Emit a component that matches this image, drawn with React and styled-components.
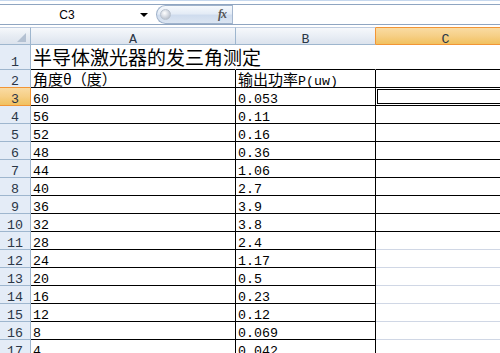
import React from "react";
import styled, { createGlobalStyle, css } from "styled-components";

const GlobalStyle = createGlobalStyle`
  html, body { margin: 0; padding: 0; background: #fff; }
  body { width: 500px; height: 353px; overflow: hidden; }
`;

const CJK = `"Noto Sans CJK SC", "Noto Sans", sans-serif`;
const MONO = `"Liberation Mono", "DejaVu Sans Mono", monospace`;
const ORANGE = "#f29536";
const ORANGE_BG = "linear-gradient(180deg, #f9dba3 0%, #f6cf86 50%, #f1c15f 100%)";
const HEAD_LINE = "#9eb6ce";
const LINE = { black: "#000", grid: "#d0d7e5", none: "transparent" };

const DATA = [
  ["60", "0.053"],
  ["56", "0.11"],
  ["52", "0.16"],
  ["48", "0.36"],
  ["44", "1.06"],
  ["40", "2.7"],
  ["36", "3.9"],
  ["32", "3.8"],
  ["28", "2.4"],
  ["24", "1.17"],
  ["20", "0.5"],
  ["16", "0.23"],
  ["12", "0.12"],
  ["8", "0.069"],
  ["4", "0.042"],
];

const Window = styled.div`
  width: 500px;
  height: 353px;
  overflow: hidden;
  display: flex;
  flex-direction: column;
`;

/* ---------- formula bar ---------- */

const BarWrap = styled.div`
  box-sizing: border-box;
  height: 27px;
  padding-top: 3px;
  border-top: 1px solid #c6d8ee;
  flex: none;
`;

const Bar = styled.div`
  box-sizing: border-box;
  height: 21px;
  display: flex;
  align-items: stretch;
  border-top: 1px solid #8fa5c1;
  border-bottom: 1px solid #8fa5c1;
`;

const NameBox = styled.div`
  width: 134px;
  display: flex;
  align-items: center;
  justify-content: center;
  font: 12px "Liberation Sans", Arial, sans-serif;
  color: #000;
`;

const Drop = styled.div`
  width: 20px;
  display: flex;
  align-items: center;
  justify-content: center;

  &::after {
    content: "";
    width: 0;
    height: 0;
    border-left: 4px solid transparent;
    border-right: 4px solid transparent;
    border-top: 4px solid #000;
    margin-top: 1px;
  }
`;

const Pill = styled.div`
  width: 76px;
  margin-left: 2px;
  box-sizing: border-box;
  display: flex;
  align-items: center;
  justify-content: space-between;
  padding: 0 6px 0 3px;
  border: 1px solid #9fb2cb;
  border-right: none;
  border-radius: 10px 0 0 10px;
  background: linear-gradient(180deg, #f6f9fd 0%, #e4ecf6 45%, #cfdcee 55%, #dbe5f2 100%);
`;

const Knob = styled.span`
  width: 9px;
  height: 9px;
  border-radius: 50%;
  background: radial-gradient(circle at 40% 35%, #ffffff 0%, #d6dbe3 45%, #a8b1be 100%);
  border: 1px solid #b9c2ce;
`;

const Fx = styled.span`
  font: italic bold 12px "Liberation Serif", "Times New Roman", serif;
  color: #555;
  letter-spacing: -1px;
`;

const FormulaInput = styled.div`
  flex: 1;
  border-left: 1px solid #a5b7cf;
  background: #fff;
`;

/* ---------- sheet grid ---------- */

const Sheet = styled.div`
  display: grid;
  grid-template-columns: 31px 205px 140px 140px;
  grid-template-rows: 18px 25px repeat(16, 18px);
  flex: none;
`;

const Latin = styled.span`
  font-family: ${MONO};
  font-size: 13.3px;
`;

const Corner = styled.div`
  box-sizing: border-box;
  border-top: 1px solid #c0cde0;
  border-right: 1px solid ${HEAD_LINE};
  border-bottom: 1px solid ${HEAD_LINE};
  background: linear-gradient(180deg, #f6f8fb 0%, #e7ecf3 50%, #dce3ed 100%);
  display: flex;
  align-items: flex-end;
  justify-content: flex-end;
  padding: 0 4px 2px 0;

  &::after {
    content: "";
    width: 0;
    height: 0;
    border-left: 9px solid transparent;
    border-bottom: 9px solid #b4c1d2;
  }
`;

const ColHead = styled.div`
  box-sizing: border-box;
  border-top: 1px solid ${(p) => (p.$selected ? ORANGE : "#c0cde0")};
  border-right: 1px solid ${(p) => (p.$beforeSelected ? ORANGE : HEAD_LINE)};
  border-bottom: 1px solid ${(p) => (p.$selected ? ORANGE : HEAD_LINE)};
  background: ${(p) =>
    p.$selected
      ? ORANGE_BG
      : "linear-gradient(180deg, #f6f8fb 0%, #e9eef5 50%, #dce3ed 100%)"};
  text-align: center;
  font: 15px/17px ${CJK};
  color: #2a3646;
`;

const RowHead = styled.div`
  box-sizing: border-box;
  background: ${(p) => (p.$selected ? ORANGE_BG : "#e4ecf7")};
  border-right: 1px solid ${(p) => (p.$selected ? ORANGE : HEAD_LINE)};
  border-bottom: 1px solid
    ${(p) => (p.$selected || p.$beforeSelected ? ORANGE : HEAD_LINE)};
  text-align: center;
  padding-top: ${(p) => (p.$tall ? 5 : 0)}px;
  font: 15px/${(p) => (p.$tall ? 20 : 18)}px ${CJK};
  color: #2a3646;
`;

const Cell = styled.div`
  box-sizing: border-box;
  min-width: 0;
  padding: 0 2px;
  font: 15px/18px ${CJK};
  color: #000;
  white-space: nowrap;
  overflow: ${(p) => (p.$spill ? "visible" : "hidden")};
  border-right: 1px solid ${(p) => LINE[p.$right || "none"]};
  border-bottom: 1px solid ${(p) => LINE[p.$bottom || "grid"]};
  ${(p) =>
    p.$title &&
    css`
      font-size: 19px;
      line-height: 24px;
    `}
  ${(p) =>
    p.$active &&
    css`
      box-shadow: inset 0 0 0 1px #fff, inset 0 0 0 2px #000;
    `}
`;

function Runs({ text }) {
  const parts = text.match(/[\x00-\x7f]+|[^\x00-\x7f]+/g) || [];
  return parts.map((p, i) =>
    /[\x00-\x7f]/.test(p[0]) ? <Latin key={i}>{p}</Latin> : <span key={i}>{p}</span>
  );
}

function App() {
  const rows = [["角度θ（度）", "输出功率P(uw)"], ...DATA];

  return (
    <Window>
      <GlobalStyle />
      <BarWrap>
        <Bar>
          <NameBox>C3</NameBox>
          <Drop />
          <Pill>
            <Knob />
            <Fx>fx</Fx>
          </Pill>
          <FormulaInput />
        </Bar>
      </BarWrap>

      <Sheet>
        <Corner />
        <ColHead><Latin>A</Latin></ColHead>
        <ColHead $beforeSelected><Latin>B</Latin></ColHead>
        <ColHead $selected><Latin>C</Latin></ColHead>

        <RowHead $tall><Latin>1</Latin></RowHead>
        <Cell $title $spill $bottom="black">半导体激光器的发三角测定</Cell>
        <Cell $bottom="black" />
        <Cell $bottom="black" />

        {rows.map(([a, b], i) => {
          const n = i + 2;
          return (
            <React.Fragment key={n}>
              <RowHead $selected={n === 3} $beforeSelected={n === 2}>
                <Latin>{n}</Latin>
              </RowHead>
              <Cell $right="black" $bottom="black">
                <Runs text={a} />
              </Cell>
              <Cell $right="black" $bottom="black">
                <Runs text={b} />
              </Cell>
              <Cell $bottom={n <= 10 ? "black" : "grid"} $active={n === 3} />
            </React.Fragment>
          );
        })}
      </Sheet>
    </Window>
  );
}

export default App;
